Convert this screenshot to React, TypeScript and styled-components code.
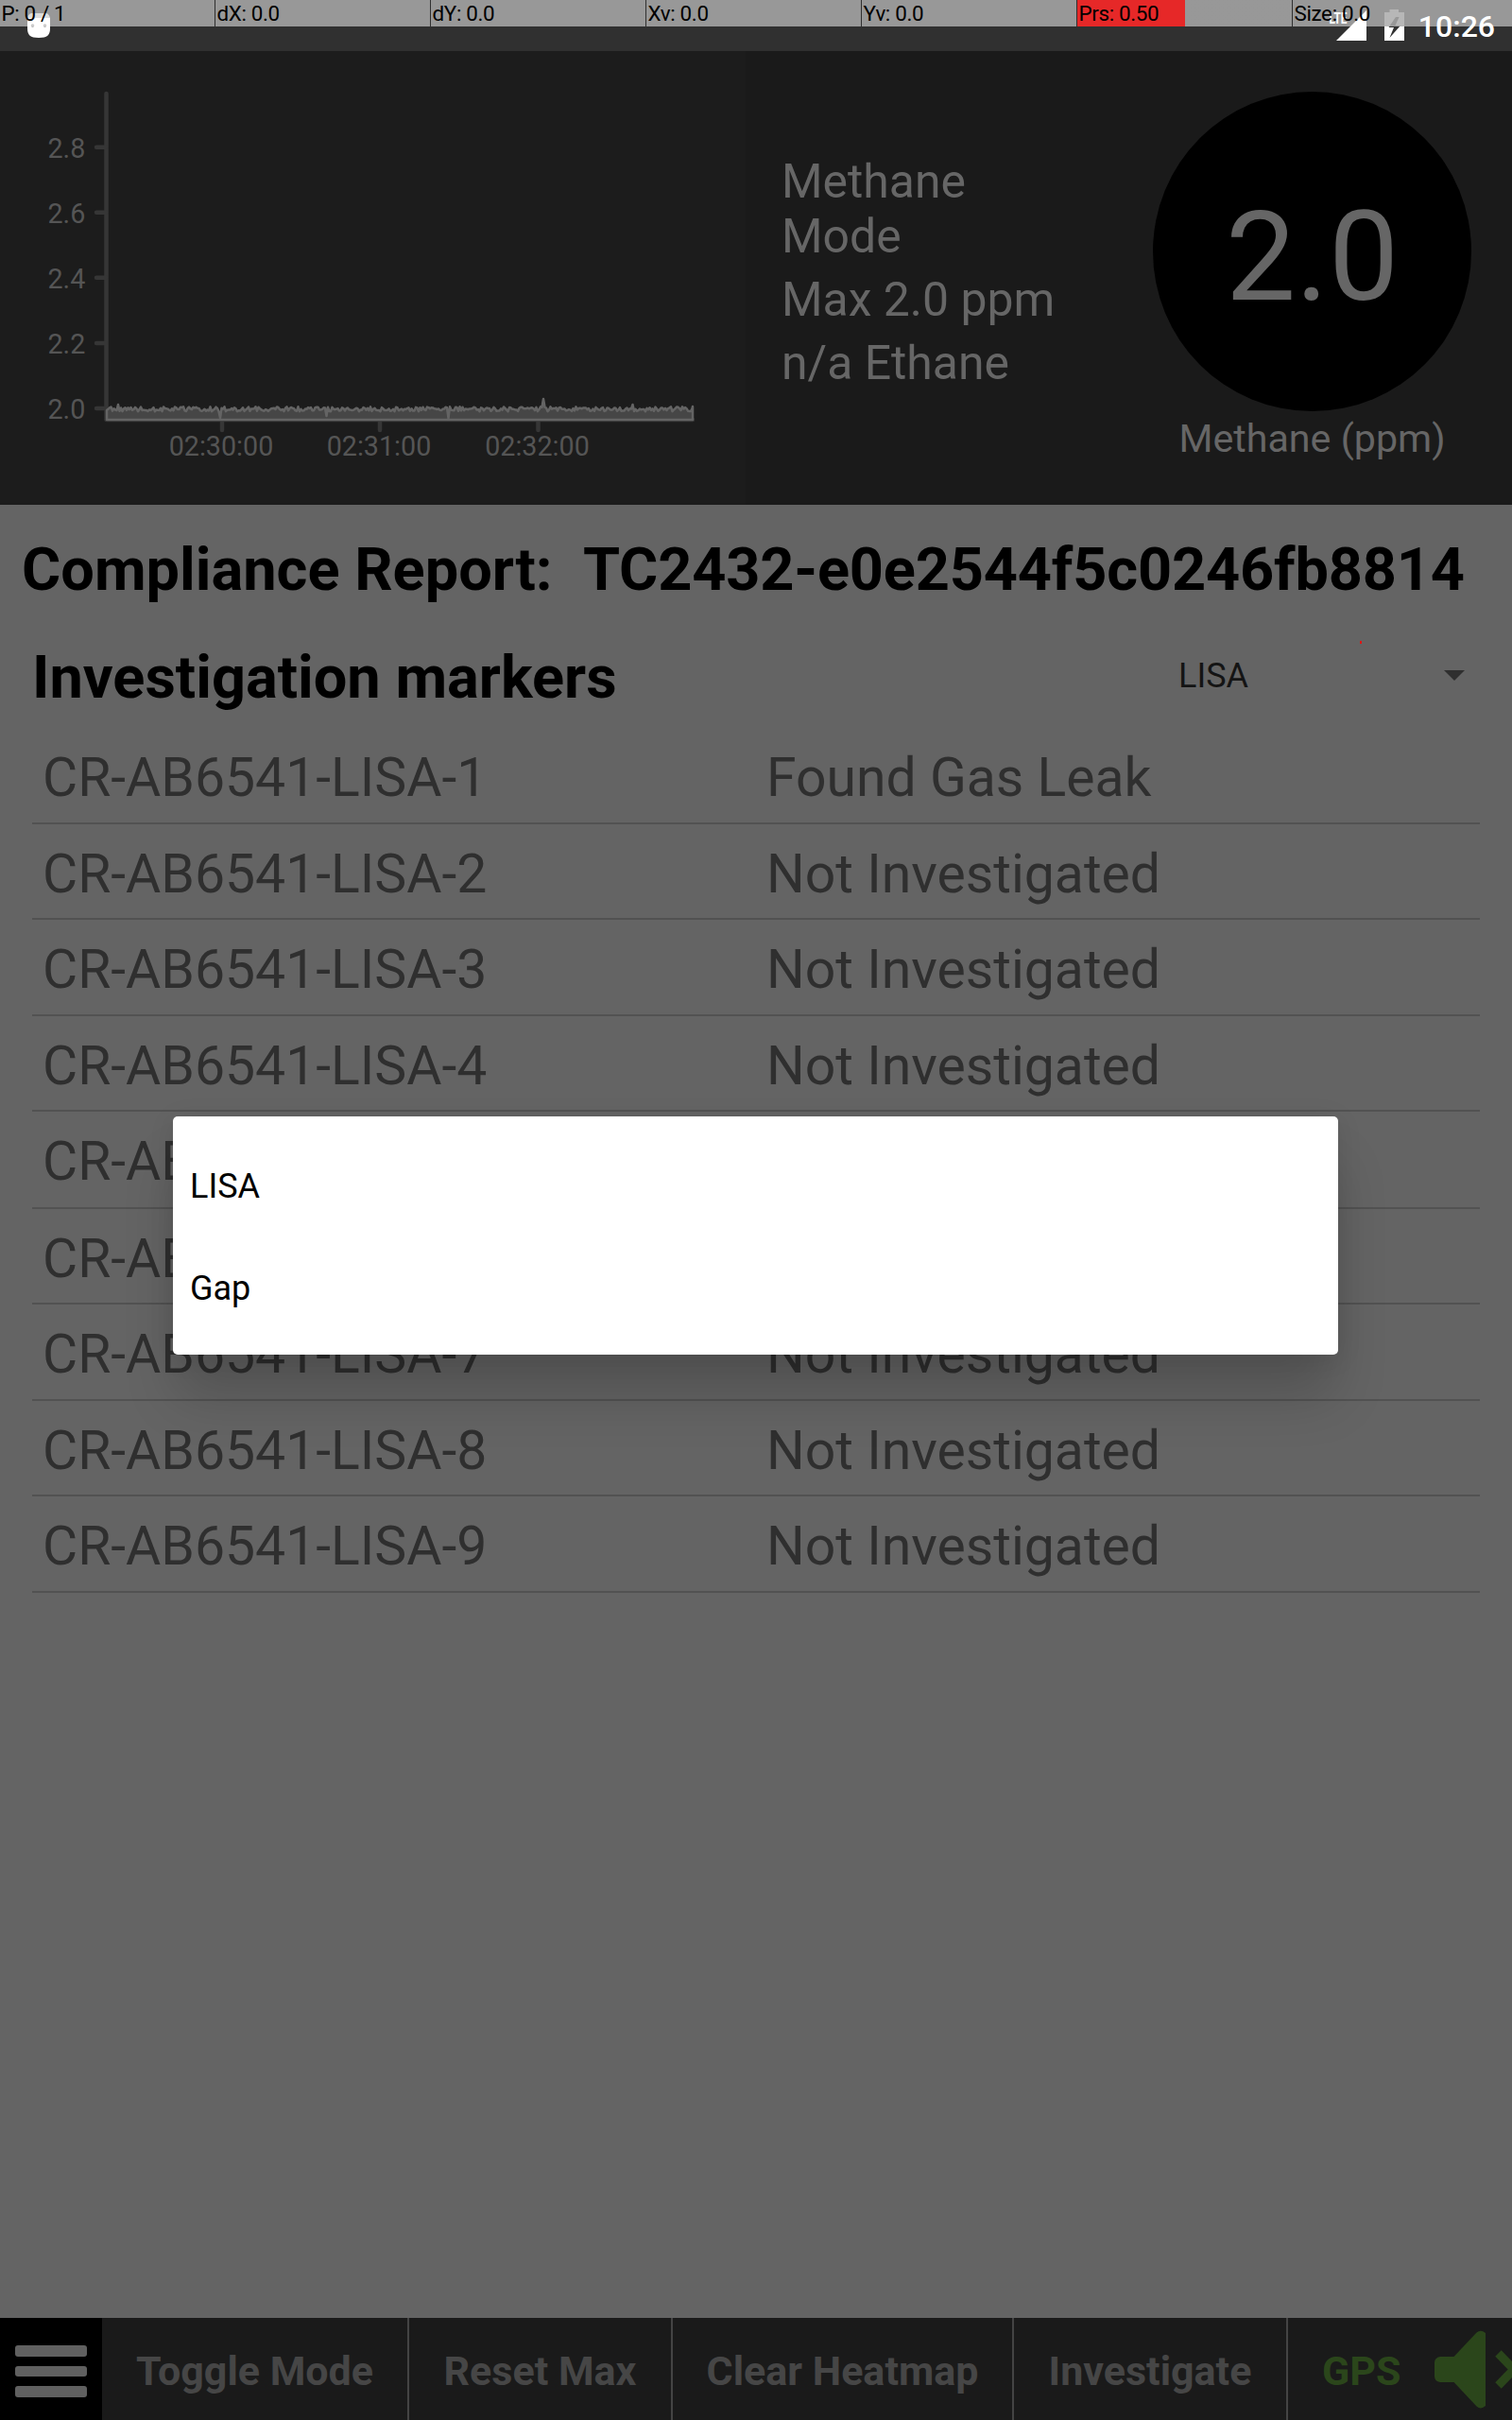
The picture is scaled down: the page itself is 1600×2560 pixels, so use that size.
import React from "react";
import styled, { createGlobalStyle } from "styled-components";

const Global = createGlobalStyle`
  * { box-sizing: border-box; }
  html, body { margin: 0; padding: 0; background: #646464; }
  body { font-family: Roboto, "Noto Sans", sans-serif; }
`;

const Screen = styled.div`
  position: relative;
  display: flex;
  flex-direction: column;
  width: 1600px;
  height: 2560px;
  overflow: hidden;
  background: #646464;
`;

/* ---------- status bar ---------- */

const StatusBar = styled.header`
  display: flex;
  align-items: flex-start;
  flex: none;
  height: 54px;
  padding: 0 18px 0 28px;
  background: #303030;
`;

const StatusIcons = styled.div`
  display: flex;
  align-items: flex-start;
  margin-left: auto;
`;

const Clock = styled.time`
  width: 83px;
  padding-top: 9px;
  color: #fff;
  font-size: 32px;
  font-weight: 500;
  line-height: 38px;
  text-align: right;
  white-space: nowrap;
`;

const PointerOverlay = styled.div`
  position: absolute;
  top: 0;
  left: 0;
  display: grid;
  grid-template-columns: repeat(6, 227px) 1fr;
  gap: 1px;
  width: 1600px;
  height: 28px;
`;

const PointerCell = styled.div<{ $pressure?: boolean }>`
  padding: 1px 0 0 1.5px;
  background: ${(p) =>
    p.$pressure
      ? "linear-gradient(90deg, #e62828 114px, rgba(255,255,255,.5) 114px)"
      : "rgba(255,255,255,.5)"};
  color: #000;
  font-size: 22.4px;
  line-height: 27px;
  letter-spacing: -0.35px;
  white-space: nowrap;
`;

const TouchDot = styled.div`
  position: absolute;
  left: 1439px;
  top: 678px;
  width: 2px;
  height: 3px;
  background: #e01515;
`;

/* ---------- readings ---------- */

const Readings = styled.section`
  display: flex;
  flex: none;
  height: 480px;
  background: #1a1a1a;
`;

const ChartPane = styled.div`
  flex: none;
  width: 789px;
  background: #1c1c1c;

  svg { display: block; }
  text { font-size: 28.7px; fill: #555; }
`;

const ModeInfo = styled.div`
  display: flex;
  flex-direction: column;
  gap: 9px;
  width: 360px;
  padding: 109px 0 0 38px;
  color: #666;
  font-size: 49.9px;
  line-height: 58px;
`;

const ModeLine = styled.div<{ $narrow?: boolean }>`
  width: ${(p) => (p.$narrow ? "220px" : "auto")};
`;

const Gauge = styled.div`
  display: flex;
  flex-direction: column;
  align-items: center;
  width: 337px;
  margin-left: 71px;
  padding-top: 43px;
  color: #666;
`;

const GaugeDial = styled.div`
  display: flex;
  align-items: center;
  justify-content: center;
  width: 337px;
  height: 338px;
  padding-top: 12px;
  border-radius: 50%;
  background: #000;
  font-size: 132px;
  line-height: 154px;
`;

const GaugeLabel = styled.div`
  margin-top: 5px;
  font-size: 41.2px;
  line-height: 48px;
`;

/* ---------- report ---------- */

const Report = styled.main`
  flex: 1;
  min-height: 0;
`;

const ReportTitle = styled.h1`
  display: flex;
  margin: 0;
  padding: 31px 0 0 23px;
  height: 130px;
  color: #000;
  font-size: 63.1px;
  font-weight: 700;
  line-height: 74px;
`;

const ReportLabel = styled.span`
  width: 594px;
`;

const ReportId = styled.span`
  letter-spacing: -0.18px;
`;

const MarkersHeader = styled.div`
  display: flex;
  height: 106px;
  padding-left: 34px;
`;

const MarkersTitle = styled.h2`
  margin: 0;
  padding-top: 15px;
  width: 1213px;
  color: #000;
  font-size: 63.1px;
  font-weight: 700;
  line-height: 74px;
`;

const Spinner = styled.div`
  display: flex;
  align-items: center;
  justify-content: space-between;
  width: 303px;
  height: 100px;
  color: #141414;
  font-size: 36px;
  line-height: 42px;
`;

const SpinnerValue = styled.span`
  padding-top: 2px;
`;

const Caret = styled.i`
  width: 0;
  height: 0;
  border: 11px solid transparent;
  border-top-color: #2f2f2f;
  border-bottom-width: 0;
`;

const MarkerTable = styled.div`
  display: grid;
  grid-template-rows: 102px 101px 102px 101px 103px 101px 102px 101px 102px;
  margin: 0 34px;
`;

const MarkerRow = styled.div`
  display: grid;
  grid-template-columns: 766px 1fr;
  border-bottom: 2px solid #525252;
  color: #2f2f2f;
  font-size: 57.1px;
  line-height: 68px;
`;

const MarkerCell = styled.span`
  padding: 19px 0 0 11px;
  white-space: nowrap;
`;

/* ---------- popup ---------- */

const Popup = styled.ul`
  position: absolute;
  left: 183px;
  top: 1181px;
  width: 1233px;
  margin: 0;
  padding: 18px 0;
  border-radius: 5px;
  background: #fff;
  box-shadow: 0 48px 56px -4px rgba(0, 0, 0, 0.18), 0 4px 28px rgba(0, 0, 0, 0.09);
  list-style: none;
`;

const PopupItem = styled.li`
  display: flex;
  align-items: center;
  height: 108px;
  padding: 3px 0 0 18px;
  color: #000;
  font-size: 36px;
  line-height: 42px;
`;

/* ---------- bottom bar ---------- */

const BottomBar = styled.nav`
  display: flex;
  flex: none;
  height: 108px;
  background: #1a1a1a;
`;

const MenuButton = styled.button`
  display: flex;
  flex: none;
  flex-direction: column;
  align-items: center;
  justify-content: center;
  gap: 10px;
  width: 108px;
  padding: 5px 0 0 0;
  border: 0;
  background: #000;
`;

const MenuBar = styled.span`
  width: 76px;
  height: 11.5px;
  border-radius: 3px;
  background: #606060;
`;

const BarButton = styled.button<{ $width: number }>`
  flex: none;
  width: ${(p) => p.$width}px;
  padding: 4px 0 0 0;
  border: 0;
  border-right: 2px solid #444;
  background: transparent;
  color: #464646;
  font-family: inherit;
  font-size: 43px;
  font-weight: 700;
  white-space: nowrap;
`;

const GpsStatus = styled.div`
  display: flex;
  flex: none;
  align-items: center;
  width: 155px;
  padding: 4px 0 0 36px;
  color: #2b461b;
  font-size: 43px;
  font-weight: 700;
`;

const SoundIcon = styled.svg`
  flex: none;
  width: 82px;
  height: 108px;
`;

const pointer = ["P: 0 / 1", "dX: 0.0", "dY: 0.0", "Xv: 0.0", "Yv: 0.0", "Prs: 0.50", "Size: 0.0"];

const markers = Array.from({ length: 9 }, (_, i) => ({
  name: `CR-AB6541-LISA-${i + 1}`,
  state: i === 0 ? "Found Gas Leak" : "Not Investigated",
}));

const yTicks = [
  { label: "2.8", y: 101.5 },
  { label: "2.6", y: 170.5 },
  { label: "2.4", y: 239.5 },
  { label: "2.2", y: 308.8 },
  { label: "2.0", y: 377.8 },
];
const xTicks = [
  { label: "02:30:00", x: 235 },
  { label: "02:31:00", x: 402 },
  { label: "02:32:00", x: 569.5 },
];

/* methane trace: sensor noise around 2.0 ppm with a few spikes */
const spikes: Record<number, number> = { 125: 374, 233: 388, 346: 386, 475: 388, 575: 368, 669: 374 };
const trace = (() => {
  let seed = 17;
  const pts: string[] = [];
  for (let x = 113; x <= 733; x += 1.5) {
    seed = (seed * 1103515245 + 12345) % 2147483648;
    const noise = seed / 2147483648;
    const hit = Object.keys(spikes).find((k) => Math.abs(Number(k) - x) < 0.75);
    const y = hit ? spikes[Number(hit)] : 378.5 + (noise - 0.45) * 5;
    pts.push(`${x},${y.toFixed(1)}`);
  }
  return pts.join(" ");
})();

const Chart = () => (
  <svg width="789" height="480" viewBox="0 0 789 480">
    <g stroke="#363636" strokeWidth="4.5" strokeLinecap="round">
      <line x1="112.5" y1="45" x2="112.5" y2="389" />
      <line x1="112.5" y1="390" x2="733" y2="390" />
      {yTicks.map((t) => (
        <line key={t.label} x1="102" x2="112" y1={t.y + 0.3} y2={t.y + 0.3} />
      ))}
      {xTicks.map((t) => (
        <line key={t.label} x1={t.x} x2={t.x} y1="392" y2="401" />
      ))}
    </g>
    {yTicks.map((t) => (
      <text key={t.label} x="90.3" y={t.y + 11.3} textAnchor="end">
        {t.label}
      </text>
    ))}
    {xTicks.map((t) => (
      <text key={t.label} x={t.x - 1} y="428" textAnchor="middle">
        {t.label}
      </text>
    ))}
    <polygon
      points={`113,390 ${trace} 733,376 733,390`}
      fill="#464646"
      stroke="#646464"
      strokeWidth="2.5"
      strokeLinejoin="round"
    />
  </svg>
);

export default function App() {
  return (
    <>
      <Global />
      <Screen>
        <StatusBar>
          <svg width="26" height="54" viewBox="0 0 26 54">
            <path d="M1 19h24v11c0 7-3 10-12 10S1 37 1 30z" fill="#fff" />
            <path d="M1 19c1-4 3-5 5-5h14c2 0 4 1 5 5z" fill="#bbb" />
            <circle cx="6.5" cy="27" r="1.8" fill="#999" />
            <circle cx="19.5" cy="27" r="1.8" fill="#999" />
          </svg>
          <StatusIcons>
            <svg width="96" height="54" viewBox="0 0 96 54">
              <path d="M11 43L43 11V43z" fill="#fff" />
              <text
                x="3.5"
                y="25"
                fontSize="17"
                fontWeight="700"
                fill="#fff"
                textLength="19"
                lengthAdjust="spacingAndGlyphs"
              >
                LTE
              </text>
              <path d="M62 13h5.500v-3h9.500v3h6v16h-21z" fill="#6e6e6e" />
              <path d="M62 28h21v15h-21z" fill="#fff" />
              <path d="M74 18L66.500 29h5.500l-4.500 11L79 27h-5.500l4-9z" fill="#303030" />
            </svg>
            <Clock>10:26</Clock>
          </StatusIcons>
        </StatusBar>

        <Readings>
          <ChartPane>
            <Chart />
          </ChartPane>
          <ModeInfo>
            <ModeLine $narrow>Methane Mode</ModeLine>
            <ModeLine>Max 2.0 ppm</ModeLine>
            <ModeLine>n/a Ethane</ModeLine>
          </ModeInfo>
          <Gauge>
            <GaugeDial>2.0</GaugeDial>
            <GaugeLabel>Methane (ppm)</GaugeLabel>
          </Gauge>
        </Readings>

        <Report>
          <ReportTitle>
            <ReportLabel>Compliance Report:</ReportLabel>
            <ReportId>TC2432-e0e2544f5c0246fb8814</ReportId>
          </ReportTitle>
          <MarkersHeader>
            <MarkersTitle>Investigation markers</MarkersTitle>
            <Spinner>
              <SpinnerValue>LISA</SpinnerValue>
              <Caret />
            </Spinner>
          </MarkersHeader>
          <MarkerTable>
            {markers.map((m) => (
              <MarkerRow key={m.name}>
                <MarkerCell>{m.name}</MarkerCell>
                <MarkerCell>{m.state}</MarkerCell>
              </MarkerRow>
            ))}
          </MarkerTable>
        </Report>

        <BottomBar>
          <MenuButton aria-label="Menu">
            <MenuBar />
            <MenuBar />
            <MenuBar />
          </MenuButton>
          <BarButton $width={325}>Toggle Mode</BarButton>
          <BarButton $width={279}>Reset Max</BarButton>
          <BarButton $width={361}>Clear Heatmap</BarButton>
          <BarButton $width={290}>Investigate</BarButton>
          <GpsStatus>GPS</GpsStatus>
          <SoundIcon viewBox="0 0 82 108" fill="#2b461b">
            <path d="M6 41H20.500L44.500 15.500Q49 12 54 16V93Q49 97.500 44.500 93.500L20.500 68H6Q0 67 0 61.500V47.500Q0 42 6 41Z" />
            <path d="M67.500 37.500L84 54.500L67.500 71.500M101 37.500L84 54.500L101 71.500" fill="none" stroke="#2b461b" strokeWidth="9" />
          </SoundIcon>
        </BottomBar>

        <Popup>
          <PopupItem>LISA</PopupItem>
          <PopupItem>Gap</PopupItem>
        </Popup>
        <PointerOverlay>
          {pointer.map((label) => (
            <PointerCell key={label} $pressure={label.startsWith("Prs")}>
              {label}
            </PointerCell>
          ))}
        </PointerOverlay>
        <TouchDot />
      </Screen>
    </>
  );
}
